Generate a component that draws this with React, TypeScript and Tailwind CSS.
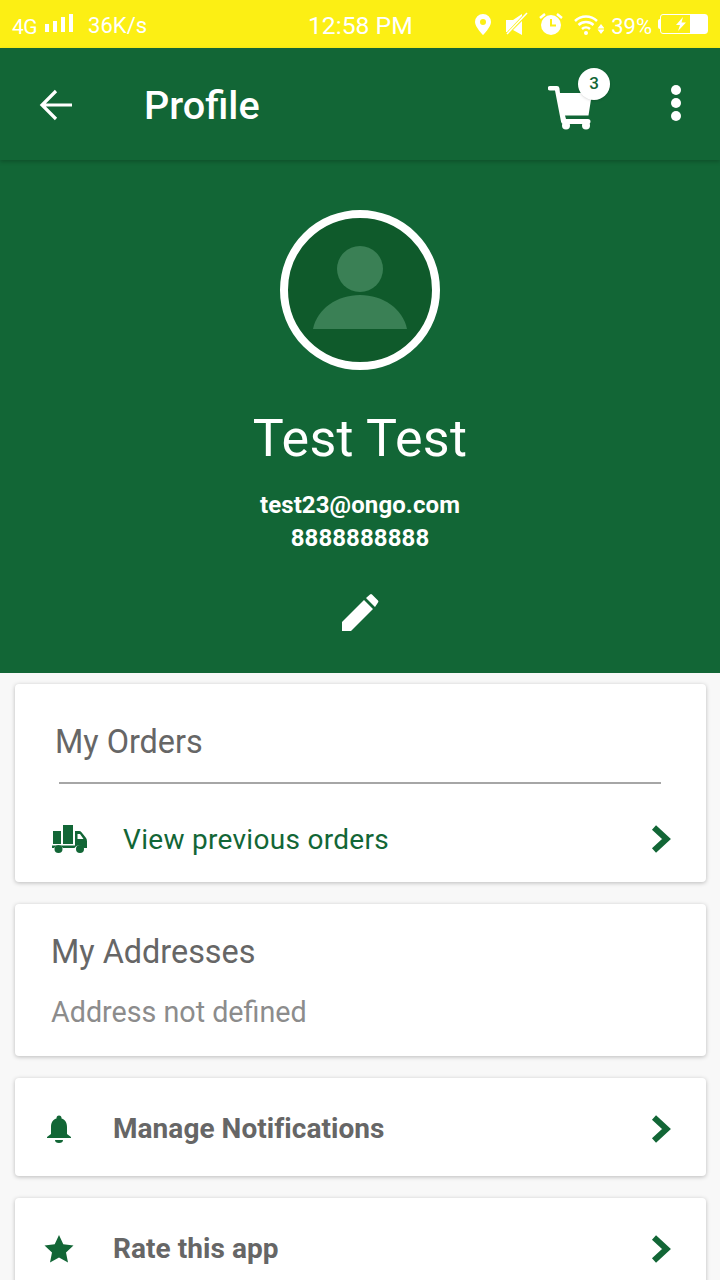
import React from "react";

const font = { fontFamily: "Roboto, sans-serif" };

const Chevron = () => (
  <svg width="20" height="28" viewBox="0 0 20 28" className="shrink-0">
    <path d="M3 2.500 L15.500 14 L3 25.500" fill="none" stroke="#126636" strokeWidth="6" />
  </svg>
);

const StatusBar = () => (
  <div className="relative flex h-12 items-center justify-between bg-[#fcef14] pl-3 pr-3 text-white">
    <div className="mt-[4px] flex items-center">
      <span className="mt-0.5 text-[21px] leading-none tracking-[-0.5px]">4G</span>
      <svg width="30" height="24" viewBox="0 0 30 24" className="mb-0.5 ml-[7px] fill-white">
        <rect x="1" y="11" width="4" height="8" />
        <rect x="9" y="8" width="4" height="11" />
        <rect x="17" y="4" width="4" height="15" />
        <rect x="25" y="1" width="4" height="18" />
      </svg>
      <span className="ml-[14px] text-[22px] leading-none">36K/s</span>
    </div>
    <span className="absolute left-[308px] top-[14px] text-[24.7px] leading-none">12:58 PM</span>
    <div className="flex items-center">
      <svg width="18" height="24" viewBox="0 0 18 24" className="fill-white">
        <path fillRule="evenodd" d="M9 2a8 8 0 0 0-8 8c0 5 8 13 8 13s8-8 8-13a8 8 0 0 0-8-8zm0 5a3 3 0 1 1 0 6 3 3 0 0 1 0-6z" />
      </svg>
      <svg width="22" height="24" viewBox="0 0 22 24" className="ml-[14px]">
        <path d="M0 8h7l9-6v2L1 20H0z" fill="#fff" />
        <path d="M1 22L21 1" stroke="#fff" strokeWidth="1.500" />
        <path d="M16 9v14l-9-5z" fill="#fff" />
      </svg>
      <svg width="24" height="24" viewBox="0 0 24 24" className="ml-[11px]">
        <circle cx="12" cy="13" r="10" fill="#fff" />
        <path d="M12 7v6.500h5" fill="none" stroke="#fcef14" strokeWidth="2" />
        <path d="M1 6l5-4M23 6l-5-4" stroke="#fff" strokeWidth="2.500" />
      </svg>
      <svg width="30" height="24" viewBox="0 0 30 24" className="ml-[11px]">
        <path d="M1 9a16 16 0 0 1 22 0M4.500 13a11 11 0 0 1 15 0M8 17a6 6 0 0 1 8 0" fill="none" stroke="#fff" strokeWidth="2.500" />
        <circle cx="12" cy="21" r="2" fill="#fff" />
        <path d="M27 12l3.500 4.500h-7zM27 22l3.500-4.500h-7z" fill="#fff" />
      </svg>
      <span className="ml-[7px] mt-[5px] text-[22px] leading-none">39%</span>
      <div className="ml-[6px] flex items-center">
        <div className="h-2.5 w-0.5 rounded-l-sm bg-white" />
        <div className="flex h-5 w-[48px] items-center justify-end rounded-[3px] border border-white">
          <svg width="12" height="14" viewBox="0 0 12 14" className="mr-[3px] fill-white">
            <path d="M8 0L1 8h4l-2 6 8-8.500H6.500z" />
          </svg>
          <div className="h-full w-[17px] bg-white" />
        </div>
      </div>
    </div>
  </div>
);

const AppBar = () => (
  <div className="relative z-10 flex h-[112px] items-center bg-[#126636] shadow-[0_2px_4px_rgba(0,0,0,0.2)]">
    <svg width="34" height="34" viewBox="0 0 34 34" className="ml-[39px] mt-[2px]">
      <path d="M33 17H3M17 3L3 17l14 14" fill="none" stroke="#fff" strokeWidth="3.200" />
    </svg>
    <span className="ml-[71px] mt-[4px] text-[39.6px] font-medium leading-none text-white">Profile</span>
    <div className="relative ml-auto mr-[128px] mt-[8px] h-[46px] w-[44px]">
      <svg width="46" height="46" viewBox="0 0 46 46" className="fill-white">
        <path d="M2 1h7a2.500 2.500 0 0 1 2.400 2L12 8h32l-3.500 22.500H17l1 3.500h22a2.500 2.500 0 0 1 0 5H15.500a2.500 2.500 0 0 1-2.400-2L7 5.500H2a2.250 2.250 0 0 1 0-4.500z" />
        <circle cx="18" cy="40.500" r="4" />
        <circle cx="38" cy="40.500" r="4" />
      </svg>
      <span className="absolute -right-[18px] -top-[17px] flex h-8 w-8 items-center justify-center rounded-full bg-white text-[17px] font-medium text-[#126636] shadow-sm">
        3
      </span>
    </div>
    <div className="absolute right-[39px] top-[37px] flex flex-col gap-[3px]">
      <div className="h-[10px] w-[10px] rounded-full bg-white" />
      <div className="h-[10px] w-[10px] rounded-full bg-white" />
      <div className="h-[10px] w-[10px] rounded-full bg-white" />
    </div>
  </div>
);

const ProfileHeader = () => (
  <div className="flex h-[513px] flex-col items-center bg-[#126636] pt-[50px] text-white">
    <div className="flex h-40 w-40 items-center justify-center rounded-full border-[8px] border-white bg-[#0f5a2b]">
      <svg width="144" height="144" viewBox="0 0 144 144" className="fill-[#3a8055]">
        <circle cx="72" cy="51" r="23" />
        <path d="M25 111c4-20 24-34 47-34s43 14 47 34z" />
      </svg>
    </div>
    <h1 className="mt-[38px] text-[52px] font-normal leading-[62px] tracking-[0.3px]">Test Test</h1>
    <p className="mt-[19px] text-[24px] font-bold leading-[33px] tracking-[0.1px]">test23@ongo.com</p>
    <p className="text-[24px] font-bold leading-[33px] tracking-[0.1px]">8888888888</p>
    <svg width="40" height="40" viewBox="0 0 40 40" className="mt-[38px] fill-white">
      <path d="M2 38v-9L24 7l9 9-22 22zM26 5l4-3.500a1.500 1.500 0 0 1 2 0l6 6a1.500 1.500 0 0 1 0 2L35 14z" />
    </svg>
  </div>
);

const Card = ({ className, children }: { className: string; children: React.ReactNode }) => (
  <div className={`rounded bg-white shadow-[0_1px_4px_rgba(0,0,0,0.25)] ${className}`}>{children}</div>
);

const LinkRow = ({ icon, label }: { icon: React.ReactNode; label: string }) => (
  <Card className="flex h-[98px] items-center pr-[35px] pt-[4px]">
    <div className="flex w-[98px] justify-center">{icon}</div>
    <span className="text-[28px] font-bold leading-none tracking-[0.05px] text-[#666666]">{label}</span>
    <div className="ml-auto">
      <Chevron />
    </div>
  </Card>
);

export default function App() {
  return (
    <div className="h-[1280px] w-[720px] overflow-hidden bg-[#f8f8f8]" style={font}>
      <StatusBar />
      <AppBar />
      <ProfileHeader />

      <div className="flex flex-col gap-[22px] pl-[15px] pr-[14px] pt-[11px]">
        {/* orders */}
        <Card className="h-[198px]">
          <div className="pl-[40px] pt-[38px] text-[32.4px] leading-10 text-[#666666]">My Orders</div>
          <div className="ml-[44px] mr-[45px] mt-[20px] h-0.5 bg-[#a6a6a6]" />
          <div className="flex items-center pl-[37px] pr-[35px] pt-[39px]">
            <svg width="35" height="30" viewBox="0 0 35 30" className="shrink-0 fill-[#126636]">
              <rect x="1" y="7" width="8" height="13" />
              <rect x="11" y="1" width="10" height="19" />
              <path fillRule="evenodd" d="M23 7h4a3 3 0 0 1 2.500 1.300l4 5a6 6 0 0 1 1.500 4V24h-3.500a5 5 0 0 0-9 0H11a5 5 0 0 0-9 0H0v-2.500h23zM25.500 10v5h6l-3.500-5z" />
              <circle cx="6.500" cy="25" r="4" />
              <circle cx="28" cy="25" r="4" />
            </svg>
            <span className="ml-[36px] mt-[3px] text-[28px] leading-none tracking-[0.3px] text-[#126636]">View previous orders</span>
            <div className="ml-auto">
              <Chevron />
            </div>
          </div>
        </Card>

        {/* addresses */}
        <Card className="h-[152px] pl-[36px]">
          <div className="pt-[28px] text-[32.4px] leading-10 text-[#666666]">My Addresses</div>
          <div className="mt-[20px] text-[28.7px] leading-10 text-[#8c8c8c]">Address not defined</div>
        </Card>

        <LinkRow
          label="Manage Notifications"
          icon={
            <svg width="26" height="28" viewBox="0 0 26 28" className="mr-[10px] fill-[#126636]">
              <circle cx="13" cy="3" r="2.500" />
              <path d="M13 3c5 0 8 3.500 8 9v7l4 3v1H1v-1l4-3v-7c0-5.500 3-9 8-9z" />
              <path d="M9 25h8a4 3 0 0 1-8 0z" />
            </svg>
          }
        />
        <LinkRow
          label="Rate this app"
          icon={
            <svg width="30" height="30" viewBox="0 0 30 30" className="mr-[10px] fill-[#126636]">
              <path d="M15 1l4.300 9.300 10.200 1.200-7.500 7 2 10-9-5-9 5 2-10-7.500-7 10.200-1.200z" />
            </svg>
          }
        />
      </div>
    </div>
  );
}
